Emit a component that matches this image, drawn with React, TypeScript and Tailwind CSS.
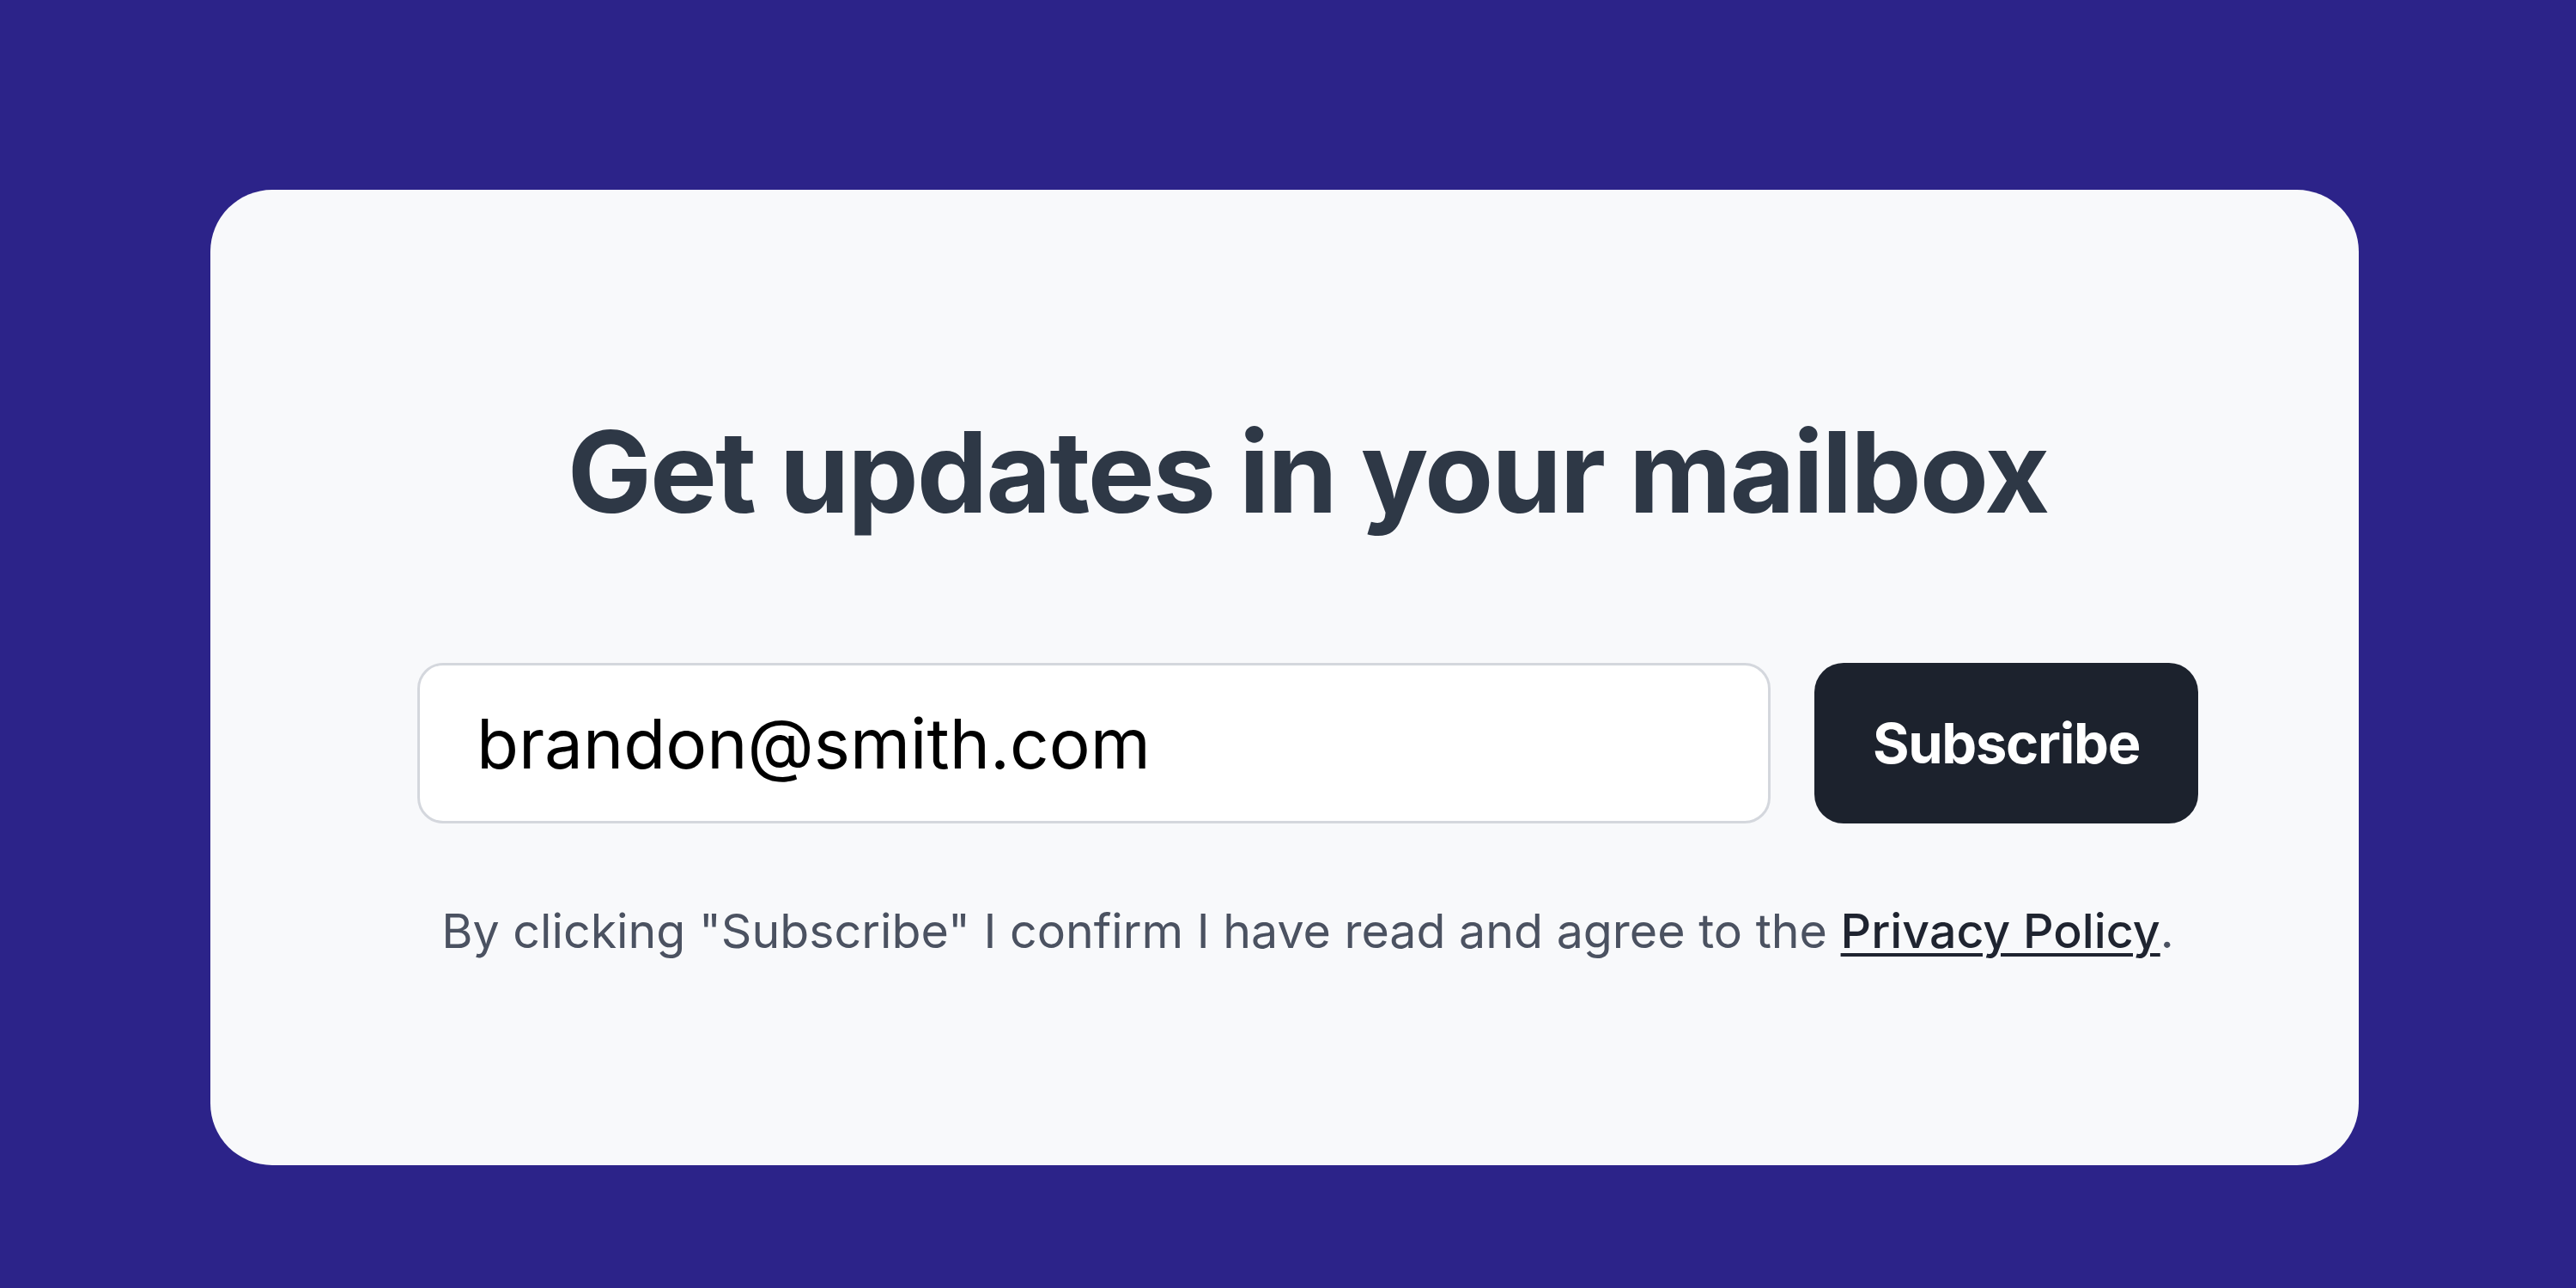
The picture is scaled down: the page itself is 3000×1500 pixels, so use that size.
import React, { useState } from 'react';

export default function App() {
    const [email, setEmail] = useState('brandon@smith.com');

    return (
        <div className="w-[3000px] h-[1500px] bg-[#2c2389] pt-[221px] pl-[245px]" style={{ fontFamily: 'Inter, "Noto Sans", sans-serif' }}>
            <div className="w-[2502px] h-[1136px] bg-[#f8f9fb] rounded-[72px] pt-[263px] pl-[241px] pr-[187px] flex flex-col items-center">
                <h2 className="text-[131px] leading-none font-bold text-[#2e3846] tracking-[-0.016em] whitespace-nowrap">
                    Get updates in your mailbox
                </h2>
                <form className="mt-[157px] w-full flex gap-[51px]" onSubmit={e => e.preventDefault()}>
                    <input
                        className="flex-1 h-[187px] bg-white border-[3px] border-[#d4d7dd] rounded-[30px] pl-[66px] text-[80px] text-black outline-none"
                        value={email}
                        onChange={e => setEmail(e.target.value)}
                    />
                    <button type="submit" className="w-[447px] h-[187px] bg-[#1c222d] rounded-[34px] text-white text-[65px] font-bold tracking-[-0.02em]">
                        Subscribe
                    </button>
                </form>
                <p className="mt-[97px] text-[55.5px] leading-none text-[#4b5261] whitespace-nowrap">
                    By clicking "Subscribe" I confirm I have read and agree to the{' '}
                    <a href="#" className="font-medium text-[#1f2430] underline decoration-[4px] underline-offset-[6px]">Privacy Policy</a>.
                </p>
            </div>
        </div>
    );
}
